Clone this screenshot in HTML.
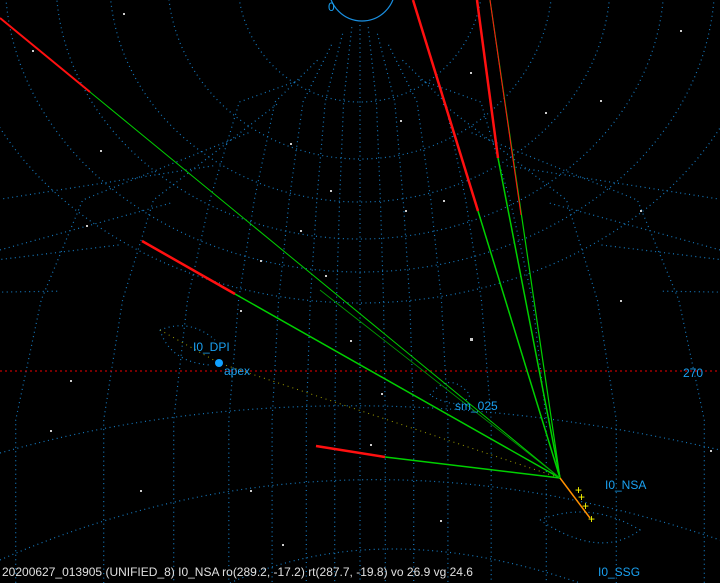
<!DOCTYPE html>
<html><head><style>
html,body{margin:0;padding:0;background:#000;width:720px;height:583px;overflow:hidden}
svg{display:block}
text{font-family:"Liberation Sans",sans-serif;font-size:12px}
</style></head><body>
<svg width="720" height="583" viewBox="0 0 720 583">
<rect width="720" height="583" fill="#000"/>
<g id="grid" fill="none" stroke="#1a8fe0" stroke-width="1.2" stroke-dasharray="1 3.5" opacity="0.85">
<path d="M0 453 Q330 360 720 450"/>
<path d="M0 560 Q340 410 720 540"/>
<path d="M230 583 Q380 515 580 583"/>
<path d="M160 330 Q170 362 210 365 M160 330 Q190 318 215 340"/>
<path d="M430 395 Q450 370 470 395 Q460 412 430 395"/>
<path d="M540 520 Q590 500 640 530 Q600 560 540 520"/>
</g>
<circle cx="362" cy="-12" r="33" fill="none" stroke="#1a8fe0" stroke-width="1.2"/>
<line x1="0" y1="371" x2="720" y2="371" stroke="#c00000" stroke-width="1.2" stroke-dasharray="2 3"/>
<path d="M160 330 L219 363 L560 478" stroke="#a0a000" stroke-width="1" stroke-dasharray="1 4" fill="none"/>
<g stroke="#00d000" fill="none">
<line x1="90" y1="92" x2="560" y2="478" stroke-width="1"/>
<line x1="235" y1="294" x2="560" y2="478" stroke-width="1.5"/>
<line x1="385" y1="457" x2="560" y2="478" stroke-width="1.5"/>
<line x1="478" y1="211" x2="560" y2="478" stroke-width="1.5"/>
<line x1="498" y1="158" x2="560" y2="478" stroke-width="1.5"/>
<line x1="490" y1="0" x2="560" y2="478" stroke-width="1.2"/>
<line x1="560" y1="478" x2="320" y2="290" stroke-width="0.8" stroke="#00a000"/>
</g>
<g stroke="#ff1010" stroke-width="2.5">
<line x1="0" y1="18" x2="90" y2="92" stroke-width="2"/>
<line x1="142" y1="241" x2="235" y2="294"/>
<line x1="316" y1="446" x2="385" y2="457"/>
<line x1="413" y1="0" x2="478" y2="211"/>
<line x1="477" y1="0" x2="498" y2="158"/>
<line x1="490" y1="0" x2="521" y2="215" stroke-width="1"/>
</g>
<line x1="560" y1="478" x2="590" y2="518" stroke="#ff9000" stroke-width="1.5"/>
<g fill="#ffff00" font-size="9"><text x="575" y="494">+</text><text x="578" y="501">+</text><text x="582" y="510">+</text><text x="588" y="523">+</text></g>
<circle cx="219" cy="363" r="4" fill="#10a0ff"/>
<g fill="#ccc">
<rect x="100" y="150" width="2" height="2"/><rect x="300" y="230" width="2" height="2"/><rect x="470" y="72" width="2" height="2"/>
<rect x="250" y="490" width="2" height="2"/><rect x="370" y="444" width="2" height="2"/><rect x="140" y="490" width="2" height="2"/>
<rect x="32" y="50" width="2" height="2"/><rect x="123" y="13" width="2" height="2"/><rect x="545" y="112" width="2" height="2"/>
<rect x="600" y="100" width="2" height="2"/><rect x="620" y="300" width="2" height="2"/><rect x="470" y="338" width="3" height="3"/>
<rect x="350" y="340" width="2" height="2"/><rect x="381" y="393" width="2" height="2"/><rect x="240" y="310" width="2" height="2"/>
<rect x="405" y="210" width="2" height="2"/><rect x="70" y="380" width="2" height="2"/><rect x="680" y="30" width="2" height="2"/>
<rect x="260" y="260" width="2" height="2"/><rect x="330" y="190" width="2" height="2"/><rect x="86" y="225" width="2" height="2"/>
<rect x="400" y="120" width="2" height="2"/><rect x="640" y="210" width="2" height="2"/><rect x="50" y="430" width="2" height="2"/>
<rect x="440" y="520" width="2" height="2"/><rect x="282" y="544" width="2" height="2"/><rect x="710" y="450" width="2" height="2"/>
<rect x="443" y="200" width="2" height="2"/><rect x="325" y="275" width="2" height="2"/><rect x="290" y="143" width="2" height="2"/>
</g>
<g fill="#1aa0f0">
<text x="328" y="11">0</text>
<text x="683" y="377">270</text>
<text x="193" y="351">I0_DPI</text>
<text x="224" y="375">apex</text>
<text x="455" y="410">sm_025</text>
<text x="605" y="489">I0_NSA</text>
<text x="598" y="576">I0_SSG</text>
</g>
<text x="2" y="576" fill="#e0e0e0">20200627_013905 (UNIFIED_8) I0_NSA ro(289.2, -17.2) rt(287.7, -19.8) vo 26.9 vg 24.6</text>
</svg>
<script>
var g=document.getElementById('grid'),ns='http://www.w3.org/2000/svg';
[102,159,202,239,272,303].forEach(function(b){
 var ry=b+20,rx=ry*(0.85+ry/800);
 var e=document.createElementNS(ns,'ellipse');
 e.setAttribute('cx',360);e.setAttribute('cy',-20);e.setAttribute('rx',rx);e.setAttribute('ry',ry);
 g.appendChild(e);
});
for(var k=-13;k<=13;k++){
 var p=document.createElementNS(ns,'path');
 var a=Math.abs(k), f=k*(1+0.02*a*a);
 var y0=25+a*a*2.2;
 var pts=[[0.35,0],[0.7,102],[0.87,200],[1,300],[1.08,420],[1.08,583]];
 var d='',first=true;
 pts.forEach(function(q,i){
   var y=Math.max(q[1],y0), x=360+23*f*q[0];
   if(i>0&&q[1]<y0)return;
   d+=(first?'M':' L')+x.toFixed(1)+' '+(i==0?y0:y);first=false;
 });
 p.setAttribute('d',d);g.appendChild(p);
}
</script>
</body></html>
